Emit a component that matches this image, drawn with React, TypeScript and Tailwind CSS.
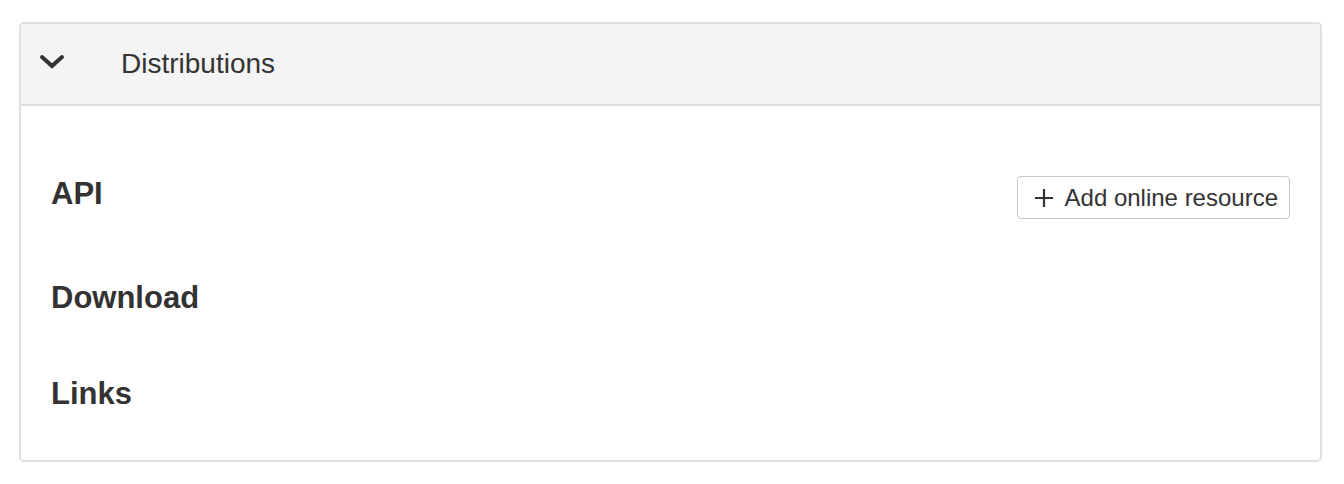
import React from "react";

export default function App() {
  return (
    <div className="w-[1344px] h-[484px] bg-white pt-[22px] pl-[19px]" style={{ fontFamily: '"Liberation Sans", Arial, sans-serif' }}>
      <div className="w-[1303px] h-[440px] border-2 border-[#e0e0e0] rounded-[5px] overflow-hidden flex flex-col">
        <div className="h-[82px] shrink-0 bg-[#f4f4f4] border-b-2 border-[#dedede] flex items-center">
          <div className="ml-[18px] w-[26px] flex items-center justify-center -mt-[6px]">
            <svg width="26" height="15" viewBox="0 0 26 15">
              <polyline points="3,3 13,12 23,3" fill="none" stroke="#333" strokeWidth="4" strokeLinecap="round" strokeLinejoin="miter" />
            </svg>
          </div>
          <span className="ml-[56px] text-[28px] text-[#333] leading-none">Distributions</span>
        </div>
        <div className="flex-1 pt-[70px] pl-[30px] pr-[30px]">
          <div className="flex items-start justify-between h-[43px]">
            <h3 className="text-[31px] leading-[36px] font-bold text-[#333]">API</h3>
            <button className="h-[43px] flex items-center border border-[#c8c8c8] rounded-[4px] pl-[16px] pr-[11px] bg-white text-[24px] text-[#333]">
              <svg width="20" height="20" viewBox="0 0 20 20" className="mr-[11px]">
                <line x1="10" y1="1" x2="10" y2="19" stroke="#333" strokeWidth="2.2" />
                <line x1="1" y1="10" x2="19" y2="10" stroke="#333" strokeWidth="2.2" />
              </svg>
              <span className="leading-none">Add online resource</span>
            </button>
          </div>
          <h3 className="mt-[61px] text-[31px] leading-[36px] font-bold text-[#333]">Download</h3>
          <h3 className="mt-[60px] text-[31px] leading-[36px] font-bold text-[#333]">Links</h3>
        </div>
      </div>
    </div>
  );
}
